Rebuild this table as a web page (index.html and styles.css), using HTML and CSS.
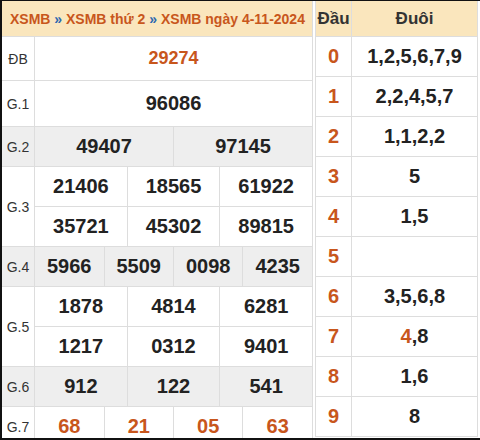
FILE: index.html
```html
<!DOCTYPE html>
<html lang="vi">
<head>
<meta charset="utf-8">
<title>XSMB 4-11-2024</title>
<link rel="stylesheet" href="styles.css">
</head>
<body>
<div class="frame">
  <div class="res">
    <div class="head"><span class="crumb">XSMB <span class="sep">»</span> XSMB thứ 2 <span class="sep">»</span> XSMB ngày 4-11-2024</span></div>

    <div class="lbl r-db">ĐB</div>
    <div class="num db s12 r-db">29274</div>

    <div class="lbl r-g1">G.1</div>
    <div class="num s12 r-g1">96086</div>

    <div class="lbl gray">G.2</div>
    <div class="num gray s6">49407</div>
    <div class="num gray s6">97145</div>

    <div class="lbl tall">G.3</div>
    <div class="num s4">21406</div>
    <div class="num s4">18565</div>
    <div class="num s4">61922</div>
    <div class="num s4">35721</div>
    <div class="num s4">45302</div>
    <div class="num s4">89815</div>

    <div class="lbl gray">G.4</div>
    <div class="num gray s3">5966</div>
    <div class="num gray s3">5509</div>
    <div class="num gray s3">0098</div>
    <div class="num gray s3">4235</div>

    <div class="lbl tall">G.5</div>
    <div class="num s4">1878</div>
    <div class="num s4">4814</div>
    <div class="num s4">6281</div>
    <div class="num s4">1217</div>
    <div class="num s4">0312</div>
    <div class="num s4">9401</div>

    <div class="lbl gray">G.6</div>
    <div class="num gray s4">912</div>
    <div class="num gray s4">122</div>
    <div class="num gray s4">541</div>

    <div class="lbl">G.7</div>
    <div class="num hi s3">68</div>
    <div class="num hi s3">21</div>
    <div class="num hi s3">05</div>
    <div class="num hi s3">63</div>
  </div>

  <div class="lt">
    <div class="th">Đầu</div><div class="th">Đuôi</div>
    <div class="dau">0</div><div class="duoi">1,2,5,6,7,9</div>
    <div class="dau">1</div><div class="duoi">2,2,4,5,7</div>
    <div class="dau">2</div><div class="duoi">1,1,2,2</div>
    <div class="dau">3</div><div class="duoi">5</div>
    <div class="dau">4</div><div class="duoi">1,5</div>
    <div class="dau">5</div><div class="duoi"></div>
    <div class="dau">6</div><div class="duoi">3,5,6,8</div>
    <div class="dau">7</div><div class="duoi"><span><span class="hi">4</span>,8</span></div>
    <div class="dau">8</div><div class="duoi">1,6</div>
    <div class="dau">9</div><div class="duoi">8</div>
  </div>
</div>
</body>
</html>
```

FILE: styles.css
```css
* { box-sizing: border-box; }
html, body { margin: 0; padding: 0; background: #fff; }
body { font-family: "Liberation Sans", Arial, sans-serif; color: #222; }

.frame {
  width: 480px;
  height: 440px;
  overflow: hidden;
  border-top: 1px solid #111;
  border-left: 2px solid #111;
  border-bottom: 2px solid #111;
  display: flex;
  align-items: flex-start;
  gap: 2px;
}

.res {
  width: 311px;
  flex: none;
  display: grid;
  grid-template-columns: 33px repeat(12, 1fr);
  grid-template-rows: 36px 44px 46px 40px 40px 40px 40px 40px 40px 40px 40px;
}
.res > div {
  border-right: 1px solid #ddd;
  border-bottom: 1px solid #ddd;
  display: flex;
  align-items: center;
  justify-content: center;
}
.head {
  grid-column: 1 / -1;
  background: #fae6bd;
  justify-content: flex-start !important;
  padding-left: 8px;
  font-size: 14px;
  font-weight: bold;
  color: #c8561c;
}
.head .crumb { white-space: nowrap; }
.head .sep { color: #2c68b0; }

.lbl {
  grid-column: 1;
  font-size: 14px;
  color: #333;
}
.lbl.tall { grid-row: span 2; }

.num {
  font-size: 20px;
  font-weight: bold;
  color: #222;
}
.num.db { font-size: 18px; color: #c8561c; }
.num.hi { color: #c8561c; }
.gray { background: #eee; }

.s12 { grid-column: span 12; }
.s6 { grid-column: span 6; }
.s4 { grid-column: span 4; }
.s3 { grid-column: span 3; }

.lt {
  width: 163px;
  flex: none;
  display: grid;
  grid-template-columns: 36px 1fr;
  grid-template-rows: 36px repeat(10, 40px);
  border-left: 1px solid #ddd;
}
.lt > div {
  border-right: 1px solid #ddd;
  border-bottom: 1px solid #ddd;
  display: flex;
  align-items: center;
  justify-content: center;
}
.th {
  background: #fae6bd;
  font-size: 17px;
  font-weight: bold;
  color: #333;
}
.dau {
  font-size: 20px;
  font-weight: bold;
  color: #c8561c;
}
.duoi {
  font-size: 20px;
  font-weight: bold;
  color: #222;
}
.duoi .hi { color: #c8561c; }
```
